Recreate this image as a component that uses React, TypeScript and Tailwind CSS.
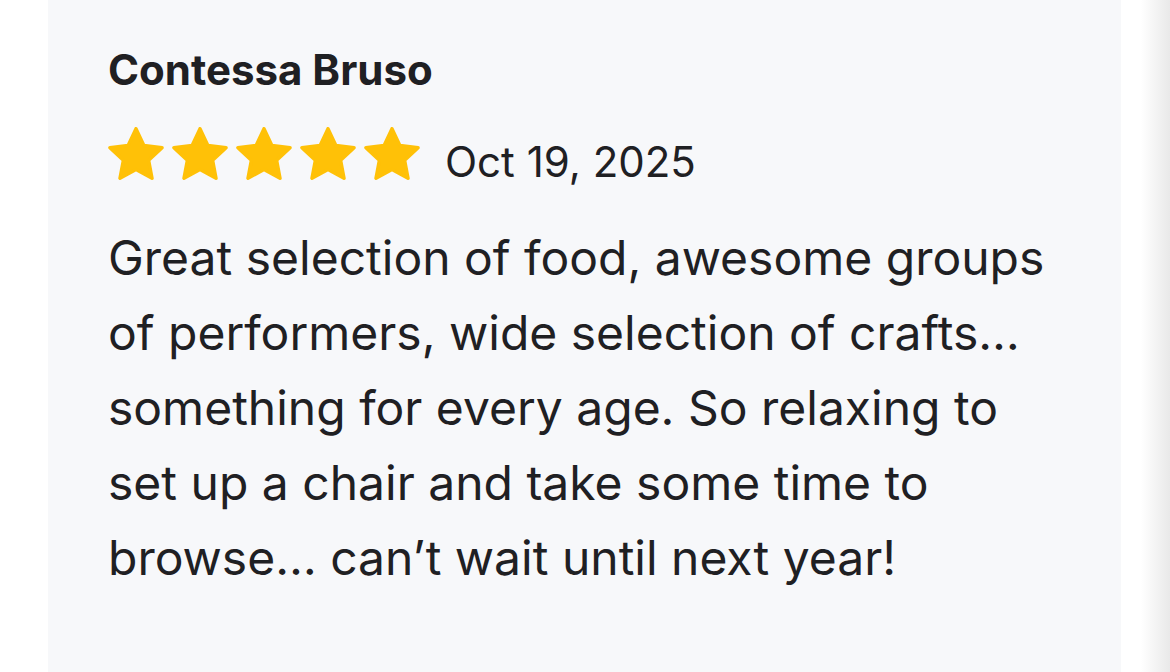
import React from "react";

const STAR_PATH =
  "M12 2.6l2.78 5.92 6.42.78-4.74 4.44 1.2 6.36L12 17.02 6.34 20.1l1.2-6.36L2.8 9.3l6.42-.78L12 2.6z";

function Star() {
  return (
    <svg viewBox="2.2 2 19.6 18.7" className="w-[56px] h-[53px]">
      <path d={STAR_PATH} fill="#FFC107" stroke="#FFC107" strokeWidth="1.2" strokeLinejoin="round" />
    </svg>
  );
}

export default function App() {
  return (
    <div className="w-[1170px] h-[672px] bg-white flex overflow-hidden font-['Inter',sans-serif]">
      <div className="w-[48px] shrink-0" />
      <div className="w-[1073px] shrink-0 bg-[#f7f8fa] pl-[60px] pr-[50px] pt-[44px] text-[#1f2023]">
        <div className="text-[42px] font-bold leading-[52px]">Contessa Bruso</div>
        <div className="flex items-start mt-[31px]">
          <div className="flex gap-[8px]">
            <Star />
            <Star />
            <Star />
            <Star />
            <Star />
          </div>
          <span className="ml-[25px] mt-[9px] text-[42px] leading-[52px]">Oct 19, 2025</span>
        </div>
        <p className="mt-[32px] text-[48px] leading-[75px]">
          Great selection of food, awesome groups of performers, wide selection of crafts… something for every age. So relaxing to set up a chair and take some time to browse… can’t wait until next year!
        </p>
      </div>
      <div className="flex-1 bg-gradient-to-r from-white from-40% to-[#e9e9e9]" />
    </div>
  );
}
